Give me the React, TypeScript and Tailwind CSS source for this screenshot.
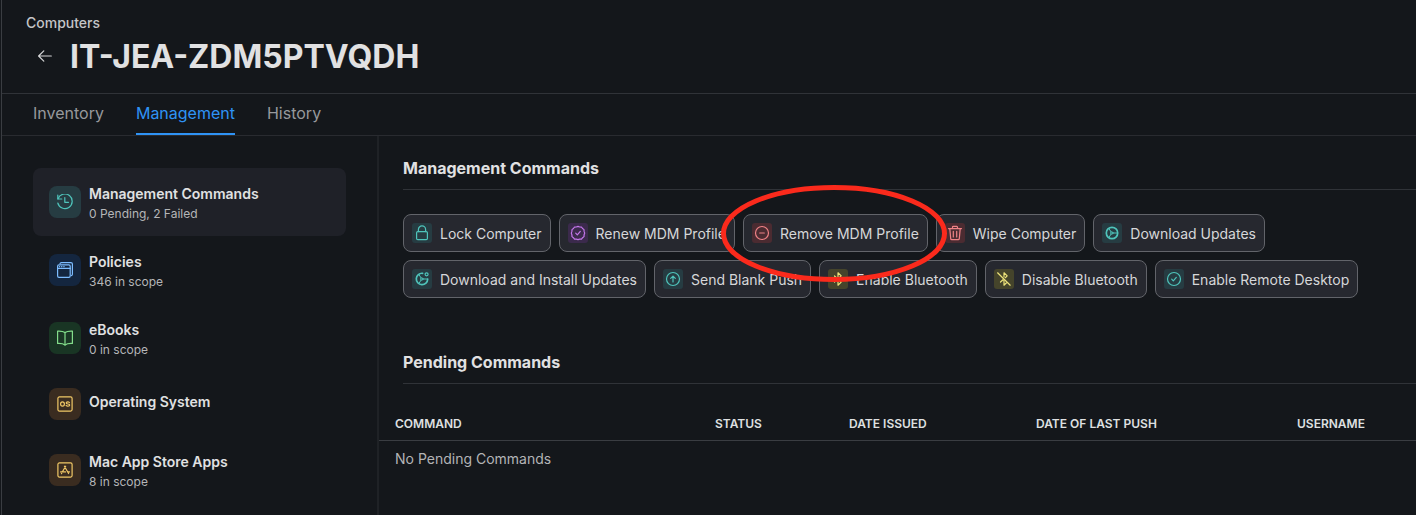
import type { ReactNode } from "react";

type Tone = "teal" | "blue" | "green" | "amber" | "purple" | "red" | "yellow";

const tones: Record<Tone, string> = {
  teal: "bg-[#263c42] text-[#4fc4bb]",
  blue: "bg-[#14263f] text-[#7cbcff]",
  green: "bg-[#193524] text-[#83dd8b]",
  amber: "bg-[#3a2c20] text-[#f0c766]",
  purple: "bg-[#3b2a4c] text-[#c377ea]",
  red: "bg-[#4b2b31] text-[#ee8286]",
  yellow: "bg-[#45442b] text-[#ece27a]",
};

function Glyph({ children }: { children: ReactNode }) {
  return (
    <svg
      viewBox="0 0 16 16"
      className="size-4"
      fill="none"
      stroke="currentColor"
      strokeWidth="1.2"
      strokeLinecap="round"
      strokeLinejoin="round"
      aria-hidden="true"
    >
      {children}
    </svg>
  );
}

const history = (
  <>
    <path d="M.8 1v4h4" />
    <path d="M1 4.900A7.300 7.300 0 1 1 .8 9" />
    <path d="M7.800 3.600v4.700h3.700" />
  </>
);

const windows = (
  <>
    <rect x=".6" y="2.800" width="12.600" height="12.600" rx="1.400" />
    <path d="M.6 6.400h12.600M2.400 4.600h.3M4.600 4.600h.3M6.800 4.600h.3" />
    <path d="M3 1.700Q3.200.6 4.300.6h9.600q1.500 0 1.500 1.500v10.200q0 1.100-1.100 1.300" />
  </>
);

const book = (
  <>
    <path d="M8 2.600C6.400 1.400 4 .9.6 1.100v12.400c3.400-.2 5.800.3 7.400 1.500 1.600-1.200 4-1.700 7.400-1.500V1.100C12 .9 9.600 1.400 8 2.600Z" />
    <path d="M8 2.600V15" />
  </>
);

const osBadge = (
  <>
    <rect x=".9" y=".9" width="14.200" height="14.200" rx="1.500" />
    <ellipse cx="5.500" cy="8" rx="1.900" ry="2.100" />
    <path d="M12.400 6.500c-.4-.5-1-.7-1.600-.7-1 0-1.600.4-1.600 1.100 0 1.600 3.500.6 3.500 2.200 0 .7-.7 1.100-1.700 1.100-.8 0-1.500-.3-1.900-.8" />
  </>
);

const appStore = (
  <>
    <rect x=".9" y=".9" width="14.200" height="14.200" rx="1.500" />
    <path d="M8.700 4.200 5.400 9.800M7.400 4.200l4.200 7.300M3.600 9.900h4.900M11 9.900h1.500M4.700 11.400l-.2.300" />
  </>
);

const lock = (
  <>
    <rect x="2.600" y="6.600" width="10.800" height="8" rx="1.200" />
    <path d="M4.400 6.600V4.500a3.600 3.600 0 0 1 7.200 0v2.100" />
  </>
);

const seal = (
  <>
    <path d="M8 1.400 9.700 2l1.800.1 1.100 1.400L14 4.600l.1 1.800.6 1.700-.6 1.700-.1 1.800-1.400 1.100-1.100 1.400-1.800.1-1.700.5-1.700-.5-1.800-.1-1.100-1.400L2 11.600l-.1-1.800-.6-1.700.6-1.700L2 4.600l1.400-1.100 1.100-1.400L6.300 2Z" />
    <path d="m5.700 8.200 1.600 1.600 3-3.400" />
  </>
);

const minus = (
  <>
    <circle cx="8" cy="8" r="6.500" />
    <path d="M5.700 8h4.600" />
  </>
);

const trash = (
  <>
    <path d="M1.500 3.600h13M5.500 3.600V2.200q0-.9.900-.9h3.200q.9 0 .9.900v1.400" />
    <path d="m2.800 3.600.9 10q.1 1 1.100 1h6.400q1 0 1.100-1l.9-10M6.300 6.300v5.600M9.700 6.300v5.600" />
  </>
);

const disc = (
  <>
    <circle cx="8" cy="8" r="5.700" strokeWidth="1.700" />
    <circle cx="7.800" cy="8" r="1.200" strokeWidth="1" />
    <path d="M9 8h4.400M7.100 7 5 3.600M7.100 9 5 12.400" strokeWidth="1" />
  </>
);

const discInstall = (
  <>
    <path d="M8.600 2.300A5.700 5.700 0 1 0 13.700 8" strokeWidth="1.700" />
    <circle cx="7.800" cy="8" r="1.200" strokeWidth="1" />
    <path d="M9 8h4.400M7.100 7 5 3.600M7.100 9 5 12.400" strokeWidth="1" />
    <circle cx="12.600" cy="3.300" r="1.500" />
  </>
);

const push = (
  <>
    <circle cx="8" cy="8" r="6.500" />
    <path d="M8 10.900V5.300M5.700 7.400 8 5.100l2.300 2.300" />
  </>
);

const bluetooth = <path d="m4.500 5 6.700 6.100L8 14.200V1.800l3.200 3.100L4.500 11" />;

const bluetoothOff = (
  <>
    <path d="M8 6V1.800l3.200 3.100L9.300 6.700M7 8.700 4.500 11M8 9v5.200l2.500-2.400" />
    <path d="m1.600 1.800 12.600 12.400" />
  </>
);

const check = (
  <>
    <circle cx="8" cy="8" r="6.500" />
    <path d="m5.700 8.200 1.600 1.600 3-3.400" />
  </>
);

const sections: { label: string; detail?: string; tone: Tone; icon: ReactNode; active?: boolean }[] = [
  { label: "Management Commands", detail: "0 Pending, 2 Failed", tone: "teal", icon: history, active: true },
  { label: "Policies", detail: "346 in scope", tone: "blue", icon: windows },
  { label: "eBooks", detail: "0 in scope", tone: "green", icon: book },
  { label: "Operating System", tone: "amber", icon: osBadge },
  { label: "Mac App Store Apps", detail: "8 in scope", tone: "amber", icon: appStore },
];

const commands: { label: string; tone: Tone; icon: ReactNode; marked?: boolean }[] = [
  { label: "Lock Computer", tone: "teal", icon: lock },
  { label: "Renew MDM Profile", tone: "purple", icon: seal },
  { label: "Remove MDM Profile", tone: "red", icon: minus, marked: true },
  { label: "Wipe Computer", tone: "red", icon: trash },
  { label: "Download Updates", tone: "teal", icon: disc },
  { label: "Download and Install Updates", tone: "teal", icon: discInstall },
  { label: "Send Blank Push", tone: "teal", icon: push },
  { label: "Enable Bluetooth", tone: "yellow", icon: bluetooth },
  { label: "Disable Bluetooth", tone: "yellow", icon: bluetoothOff },
  { label: "Enable Remote Desktop", tone: "teal", icon: check },
];

function Header() {
  return (
    <header className="border-b border-[#303338] pt-3 pb-[15px] pl-6">
      <a href="#computers" className="block text-sm leading-[22px] font-medium text-[#c4c5c7]">
        Computers
      </a>
      <div className="flex h-11 items-center gap-[17px] pl-[11px]">
        <a href="#back" aria-label="Back" className="text-[#d5d6d7]">
          <Glyph>
            <path d="M14.300 8H1.800M6.800 2.800 1.600 8l5.200 5.200" />
          </Glyph>
        </a>
        <h1 className="pt-0.5 text-[32px] leading-10 font-bold text-[#e1e1e2]">IT-JEA-ZDM5PTVQDH</h1>
      </div>
    </header>
  );
}

function Tabs() {
  return (
    <nav className="flex gap-8 border-b border-[#292b30] pl-[31px] text-base leading-6 text-[#97999c]">
      <a href="#inventory" className="border-b-2 border-transparent pt-[7px] pb-2">Inventory</a>
      <a href="#management" aria-current="page" className="border-b-2 border-[#2f93f5] pt-[7px] pb-2 text-[#2f93f5]">
        Management
      </a>
      <a href="#history" className="border-b-2 border-transparent pt-[7px] pb-2">History</a>
    </nav>
  );
}

function Sidebar() {
  return (
    <aside className="w-[377px] shrink-0 border-r-2 border-[#1f2226] pt-8 pr-[31px] pl-[31px]">
      <ul>
        {sections.map((s) => (
          <li key={s.label}>
            <a
              href="#section"
              className={
                "flex items-center gap-2 rounded-lg px-4 " +
                (s.detail ? "h-[68px] " : "h-16 ") +
                (s.active ? "bg-[#1f2128]" : "")
              }
            >
              <span className={"flex size-8 items-center justify-center rounded-lg " + tones[s.tone]}>
                <Glyph>{s.icon}</Glyph>
              </span>
              <span className={"flex flex-col " + (s.detail ? "pt-1" : "pb-1")}>
                <span className="text-sm leading-5 font-semibold text-[#e0e1e2]">{s.label}</span>
                {s.detail && <span className="text-xs leading-5 text-[#b5b6b8]">{s.detail}</span>}
              </span>
            </a>
          </li>
        ))}
      </ul>
    </aside>
  );
}

function CommandButton({ label, tone, icon, marked }: (typeof commands)[number]) {
  return (
    <div className={marked ? "relative z-10" : ""}>
      <button
        type="button"
        className="flex h-[38px] items-center gap-2 rounded-lg border border-[#62646a] bg-[#26282f] px-2 text-sm text-[#d6d7d9]"
      >
        <span className={"flex size-5 items-center justify-center rounded-[3px] " + tones[tone]}>
          <Glyph>{icon}</Glyph>
        </span>
        <span className="pt-0.5">{label}</span>
      </button>
      {marked && (
        <svg
          viewBox="0 0 228 98"
          className="pointer-events-none absolute top-1/2 left-1/2 h-[98px] w-[228px] -translate-x-1/2 -translate-y-1/2"
          fill="none"
          stroke="#fb2a1c"
          strokeWidth="5"
          aria-hidden="true"
        >
          <ellipse cx="113" cy="49.500" rx="110.500" ry="46" />
        </svg>
      )}
    </div>
  );
}

function SectionTitle({ children }: { children: ReactNode }) {
  return (
    <h2 className="ml-6 border-b border-[#303338] pb-[9px] text-base leading-6 font-bold text-[#e1e1e2]">
      {children}
    </h2>
  );
}

export default function App() {
  return (
    <div className="min-h-screen overflow-x-hidden bg-[#14171b] pl-px font-['Inter',sans-serif]">
      <div className="flex min-h-screen flex-col border-l border-[#3a3d42]">
        <Header />
        <Tabs />
        <div className="flex flex-1">
          <Sidebar />
          <main className="min-w-0 flex-1 pt-5">
            <SectionTitle>Management Commands</SectionTitle>
            <div className="mt-6 mb-[52px] flex flex-wrap gap-2 pl-6">
              {commands.map((c) => (
                <CommandButton key={c.label} {...c} />
              ))}
            </div>
            <SectionTitle>Pending Commands</SectionTitle>
            <table className="mt-6 w-full table-fixed text-left">
              <thead>
                <tr className="h-8 border-b border-[#3a3d42] text-xs text-[#dfe0e1]">
                  <th className="w-80 pl-4 font-semibold">COMMAND</th>
                  <th className="w-[134px] pl-4 font-semibold">STATUS</th>
                  <th className="w-[187px] pl-4 font-semibold">DATE ISSUED</th>
                  <th className="w-[261px] pl-4 font-semibold">DATE OF LAST PUSH</th>
                  <th className="pl-4 font-semibold">USERNAME</th>
                </tr>
              </thead>
              <tbody>
                <tr className="h-[38px] text-sm text-[#b3b4b6]">
                  <td colSpan={5} className="pl-4">No Pending Commands</td>
                </tr>
              </tbody>
            </table>
          </main>
        </div>
      </div>
    </div>
  );
}
